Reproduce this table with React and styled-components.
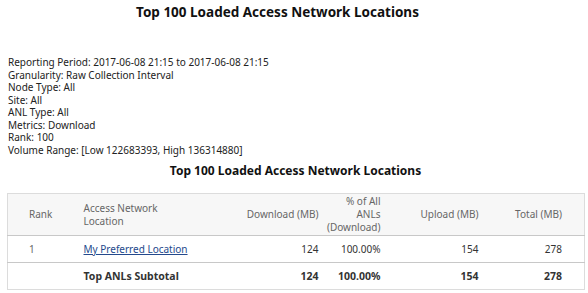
import React from "react";
import styled, { createGlobalStyle } from "styled-components";

const Global = createGlobalStyle`
  html, body { margin: 0; padding: 0; background: #ffffff; }
  body { font-family: "Noto Sans", "Open Sans", sans-serif; color: #222; }
`;

const Page = styled.div`
  width: 588px;
  padding: 4px 4px 0 7px;
  box-sizing: border-box;
`;

const Title = styled.h1`
  margin: 0;
  padding-right: 36px;
  font-size: 13.5px;
  line-height: 16px;
  font-weight: 700;
  text-align: center;
  color: #111;
`;

const Meta = styled.div`
  margin-top: 36px;
  padding-left: 1px;
  font-size: 10px;
  line-height: 12.5px;
  color: #222;
`;

const SubTitle = styled.h2`
  margin: 6px 0 0;
  font-size: 12px;
  line-height: 18px;
  font-weight: 700;
  text-align: center;
  color: #111;
`;

const Table = styled.table`
  margin-top: 13px;
  width: 577px;
  border-collapse: collapse;
  table-layout: fixed;
  font-size: 10px;
  border: 1px solid #dcdcdc;
`;

const HeadRow = styled.tr`
  background: #f7f7f7;
  height: 42px;
`;

const Row = styled.tr`
  height: 27px;
  border-top: 1px solid #c8c8c8;
`;

const Th = styled.th`
  font-weight: 400;
  color: #666;
  line-height: 13px;
  vertical-align: middle;
  text-align: ${(p) => p.$align || "left"};
  padding: 0 ${(p) => p.$pr ?? 8}px 0 ${(p) => p.$pl ?? 8}px;
`;

const Td = styled.td`
  color: ${(p) => (p.$muted ? "#666" : "#333")};
  font-weight: ${(p) => (p.$bold ? 700 : 400)};
  font-size: ${(p) => (p.$bold ? "10.5px" : "10px")};
  vertical-align: middle;
  white-space: nowrap;
  text-align: ${(p) => p.$align || "left"};
  padding: 0 ${(p) => p.$pr ?? 8}px 0 ${(p) => p.$pl ?? 8}px;
`;

const Link = styled.a`
  color: #24498c;
  text-decoration: underline;
  cursor: pointer;
`;

const meta = [
  "Reporting Period: 2017-06-08 21:15 to 2017-06-08 21:15",
  "Granularity: Raw Collection Interval",
  "Node Type: All",
  "Site: All",
  "ANL Type: All",
  "Metrics: Download",
  "Rank: 100",
  "Volume Range: [Low 122683393, High 136314880]",
];

const cols = [
  { w: 68, pl: 21 },
  { w: 155 },
  { w: 96, align: "right" },
  { w: 62, align: "right", pl: 0 },
  { w: 98, align: "right" },
  { w: 98, align: "right", pr: 22 },
];

export default function App() {
  const c = (i) => ({ $align: cols[i].align, $pl: cols[i].pl, $pr: cols[i].pr });
  return (
    <Page>
      <Global />
      <Title>Top 100 Loaded Access Network Locations</Title>
      <Meta>
        {meta.map((m) => (
          <div key={m}>{m}</div>
        ))}
      </Meta>
      <SubTitle>Top 100 Loaded Access Network Locations</SubTitle>
      <Table>
        <colgroup>
          {cols.map((col, i) => (
            <col key={i} style={{ width: col.w }} />
          ))}
        </colgroup>
        <thead>
          <HeadRow>
            <Th {...c(0)}>Rank</Th>
            <Th {...c(1)}>
              Access Network
              <br />
              Location
            </Th>
            <Th {...c(2)}>Download (MB)</Th>
            <Th {...c(3)}>
              % of All
              <br />
              ANLs
              <br />
              (Download)
            </Th>
            <Th {...c(4)}>Upload (MB)</Th>
            <Th {...c(5)}>Total (MB)</Th>
          </HeadRow>
        </thead>
        <tbody>
          <Row>
            <Td {...c(0)} $muted>1</Td>
            <Td {...c(1)}>
              <Link>My Preferred Location</Link>
            </Td>
            <Td {...c(2)}>124</Td>
            <Td {...c(3)}>100.00%</Td>
            <Td {...c(4)}>154</Td>
            <Td {...c(5)}>278</Td>
          </Row>
          <Row>
            <Td {...c(0)}></Td>
            <Td {...c(1)} $bold>Top ANLs Subtotal</Td>
            <Td {...c(2)} $bold>124</Td>
            <Td {...c(3)} $bold>100.00%</Td>
            <Td {...c(4)} $bold>154</Td>
            <Td {...c(5)} $bold>278</Td>
          </Row>
        </tbody>
      </Table>
    </Page>
  );
}
